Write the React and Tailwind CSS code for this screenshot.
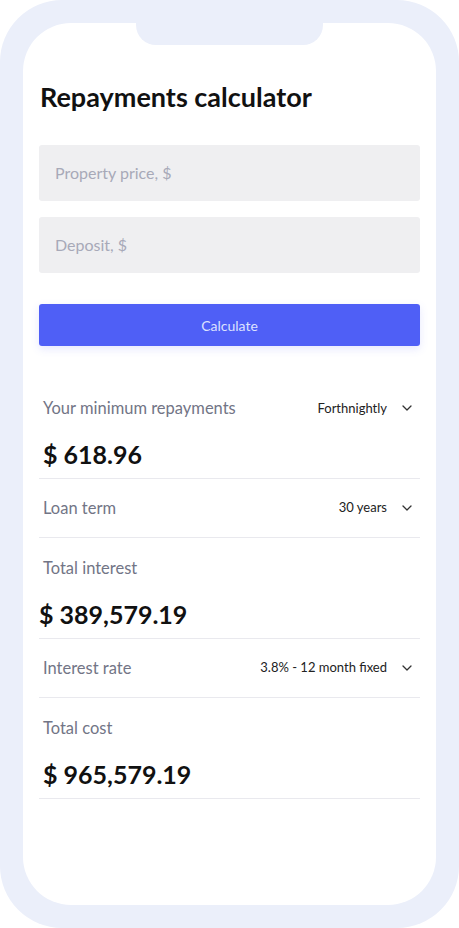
import React from "react";

const font = { fontFamily: "Lato, 'Noto Sans', sans-serif" };

function Chevron() {
  return (
    <svg width="10" height="6" viewBox="0 0 10 6" fill="none" className="ml-[15px]">
      <path d="M1 1l4 4 4-4" stroke="#333" strokeWidth="1.3" strokeLinecap="round" strokeLinejoin="round" />
    </svg>
  );
}

function ValueSection({ label, value, valueClass, dropdown }) {
  return (
    <div className="pt-[20px] pb-[8px] border-b border-[#E9E9EE]">
      <div className="h-5 leading-5 pl-1 pr-[8px] flex items-center justify-between">
        <span className="text-[16.5px] text-[#727586]">{label}</span>
        {dropdown && (
          <span className="flex items-center text-[13px] text-[#222]">
            {dropdown}
            <Chevron />
          </span>
        )}
      </div>
      <div className={"mt-[20px] h-8 leading-8 text-[25px] font-bold text-[#111] " + valueClass}>{value}</div>
    </div>
  );
}

function RowSection({ label, value }) {
  return (
    <div className="h-[59px] flex items-center justify-between border-b border-[#E9E9EE] pl-1 pr-[8px]">
      <span className="text-[16.5px] text-[#727586]">{label}</span>
      <span className="flex items-center text-[13px] text-[#222]">
        {value}
        <Chevron />
      </span>
    </div>
  );
}

export default function App() {
  return (
    <div style={font} className="w-[459px] h-[928px] bg-[#EBEFFA] rounded-[62px] p-[23px]">
      <div className="relative h-full bg-white rounded-[48px] overflow-hidden px-4">
        <div className="absolute top-0 left-[113px] w-[187px] h-[22px] bg-[#EBEFFA] rounded-b-[20px]" />
        <h1 className="pt-[57px] h-[92px] leading-[34px] text-[27px] font-bold text-[#111] pl-[1px]">
          Repayments calculator
        </h1>
        <div className="mt-[30px] h-[56px] rounded-[3px] bg-[#EFEFF1] flex items-center px-4 text-[16px] text-[#A7A9B8]">
          Property price, $
        </div>
        <div className="mt-[16px] h-[56px] rounded-[3px] bg-[#EFEFF1] flex items-center px-4 text-[16px] text-[#A7A9B8]">
          Deposit, $
        </div>
        <div className="mt-[31px] h-[42px] rounded-[3px] bg-[#4F5FF6] flex items-center justify-center text-[14px] text-[#DDE2FF] shadow-[0_3px_8px_rgba(79,95,246,0.15)]">
          Calculate
        </div>
        <div className="mt-[32px]">
          <ValueSection label="Your minimum repayments" value="$ 618.96" valueClass="pl-1" dropdown="Forthnightly" />
          <RowSection label="Loan term" value="30 years" />
          <ValueSection label="Total interest" value="$ 389,579.19" valueClass="" />
          <RowSection label="Interest rate" value="3.8% - 12 month fixed" />
          <ValueSection label="Total cost" value="$ 965,579.19" valueClass="pl-1" />
        </div>
      </div>
    </div>
  );
}
